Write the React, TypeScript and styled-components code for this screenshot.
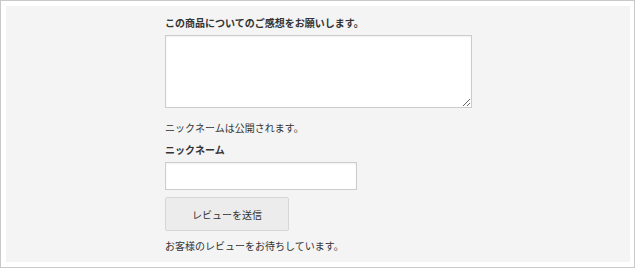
import styled, { createGlobalStyle } from 'styled-components';

const GlobalStyle = createGlobalStyle`
	html, body {
		margin: 0;
		padding: 0;
		background: #ffffff;
	}
	body {
		font-family: "Noto Sans CJK JP", "Noto Sans", sans-serif;
		color: #333333;
	}
`;

const App = () => {
	return (
		<>
			<GlobalStyle />
			<Frame>
				<Panel>
					<Form>
						<Label>この商品についてのご感想をお願いします。</Label>
						<Comment />
						<Note $gap={12}>ニックネームは公開されます。</Note>
						<Label $gap={6}>ニックネーム</Label>
						<Nickname type='text' />
						<Submit type='button'>レビューを送信</Submit>
						<Note $gap={7}>お客様のレビューをお待ちしています。</Note>
					</Form>
				</Panel>
			</Frame>
		</>
	);
};

const Frame = styled.div`
	box-sizing: border-box;
	width: 635px;
	height: 268px;
	border: 1px solid #c9c9c9;
	padding: 5px 4px 5px 5px;
	background: #ffffff;
`;

const Panel = styled.div`
	height: 100%;
	background: #f4f4f4;
	padding: 9px 0 0 159px;
	box-sizing: border-box;
`;

const Form = styled.form`
	display: flex;
	flex-direction: column;
	align-items: flex-start;
	margin: 0;
`;

const Label = styled.label<{ $gap?: number }>`
	display: block;
	margin-top: ${(p) => p.$gap ?? 0}px;
	font-size: 10px;
	line-height: 16px;
	font-weight: 700;
	color: #333333;
`;

const Note = styled.p<{ $gap?: number }>`
	margin: ${(p) => p.$gap ?? 0}px 0 0;
	font-size: 10px;
	line-height: 16px;
	color: #333333;
`;

const Comment = styled.textarea`
	box-sizing: border-box;
	width: 307px;
	height: 73px;
	margin-top: 4px;
	border: 1px solid #cccccc;
	box-shadow: inset 0 1px 2px rgba(0, 0, 0, 0.06);
	background: #ffffff;
	border-radius: 0;
	padding: 4px;
	font-family: inherit;
`;

const Nickname = styled.input`
	box-sizing: border-box;
	width: 192px;
	height: 28px;
	margin-top: 4px;
	border: 1px solid #cccccc;
	box-shadow: inset 0 1px 2px rgba(0, 0, 0, 0.06);
	background: #ffffff;
	border-radius: 0;
	padding: 0 6px;
	font-family: inherit;
`;

const Submit = styled.button`
	box-sizing: border-box;
	width: 124px;
	height: 34px;
	margin-top: 7px;
	border: 1px solid #d6d6d6;
	border-radius: 2px;
	background: #ececec;
	color: #333333;
	font-family: inherit;
	font-size: 10px;
	cursor: pointer;
`;

export default App;
